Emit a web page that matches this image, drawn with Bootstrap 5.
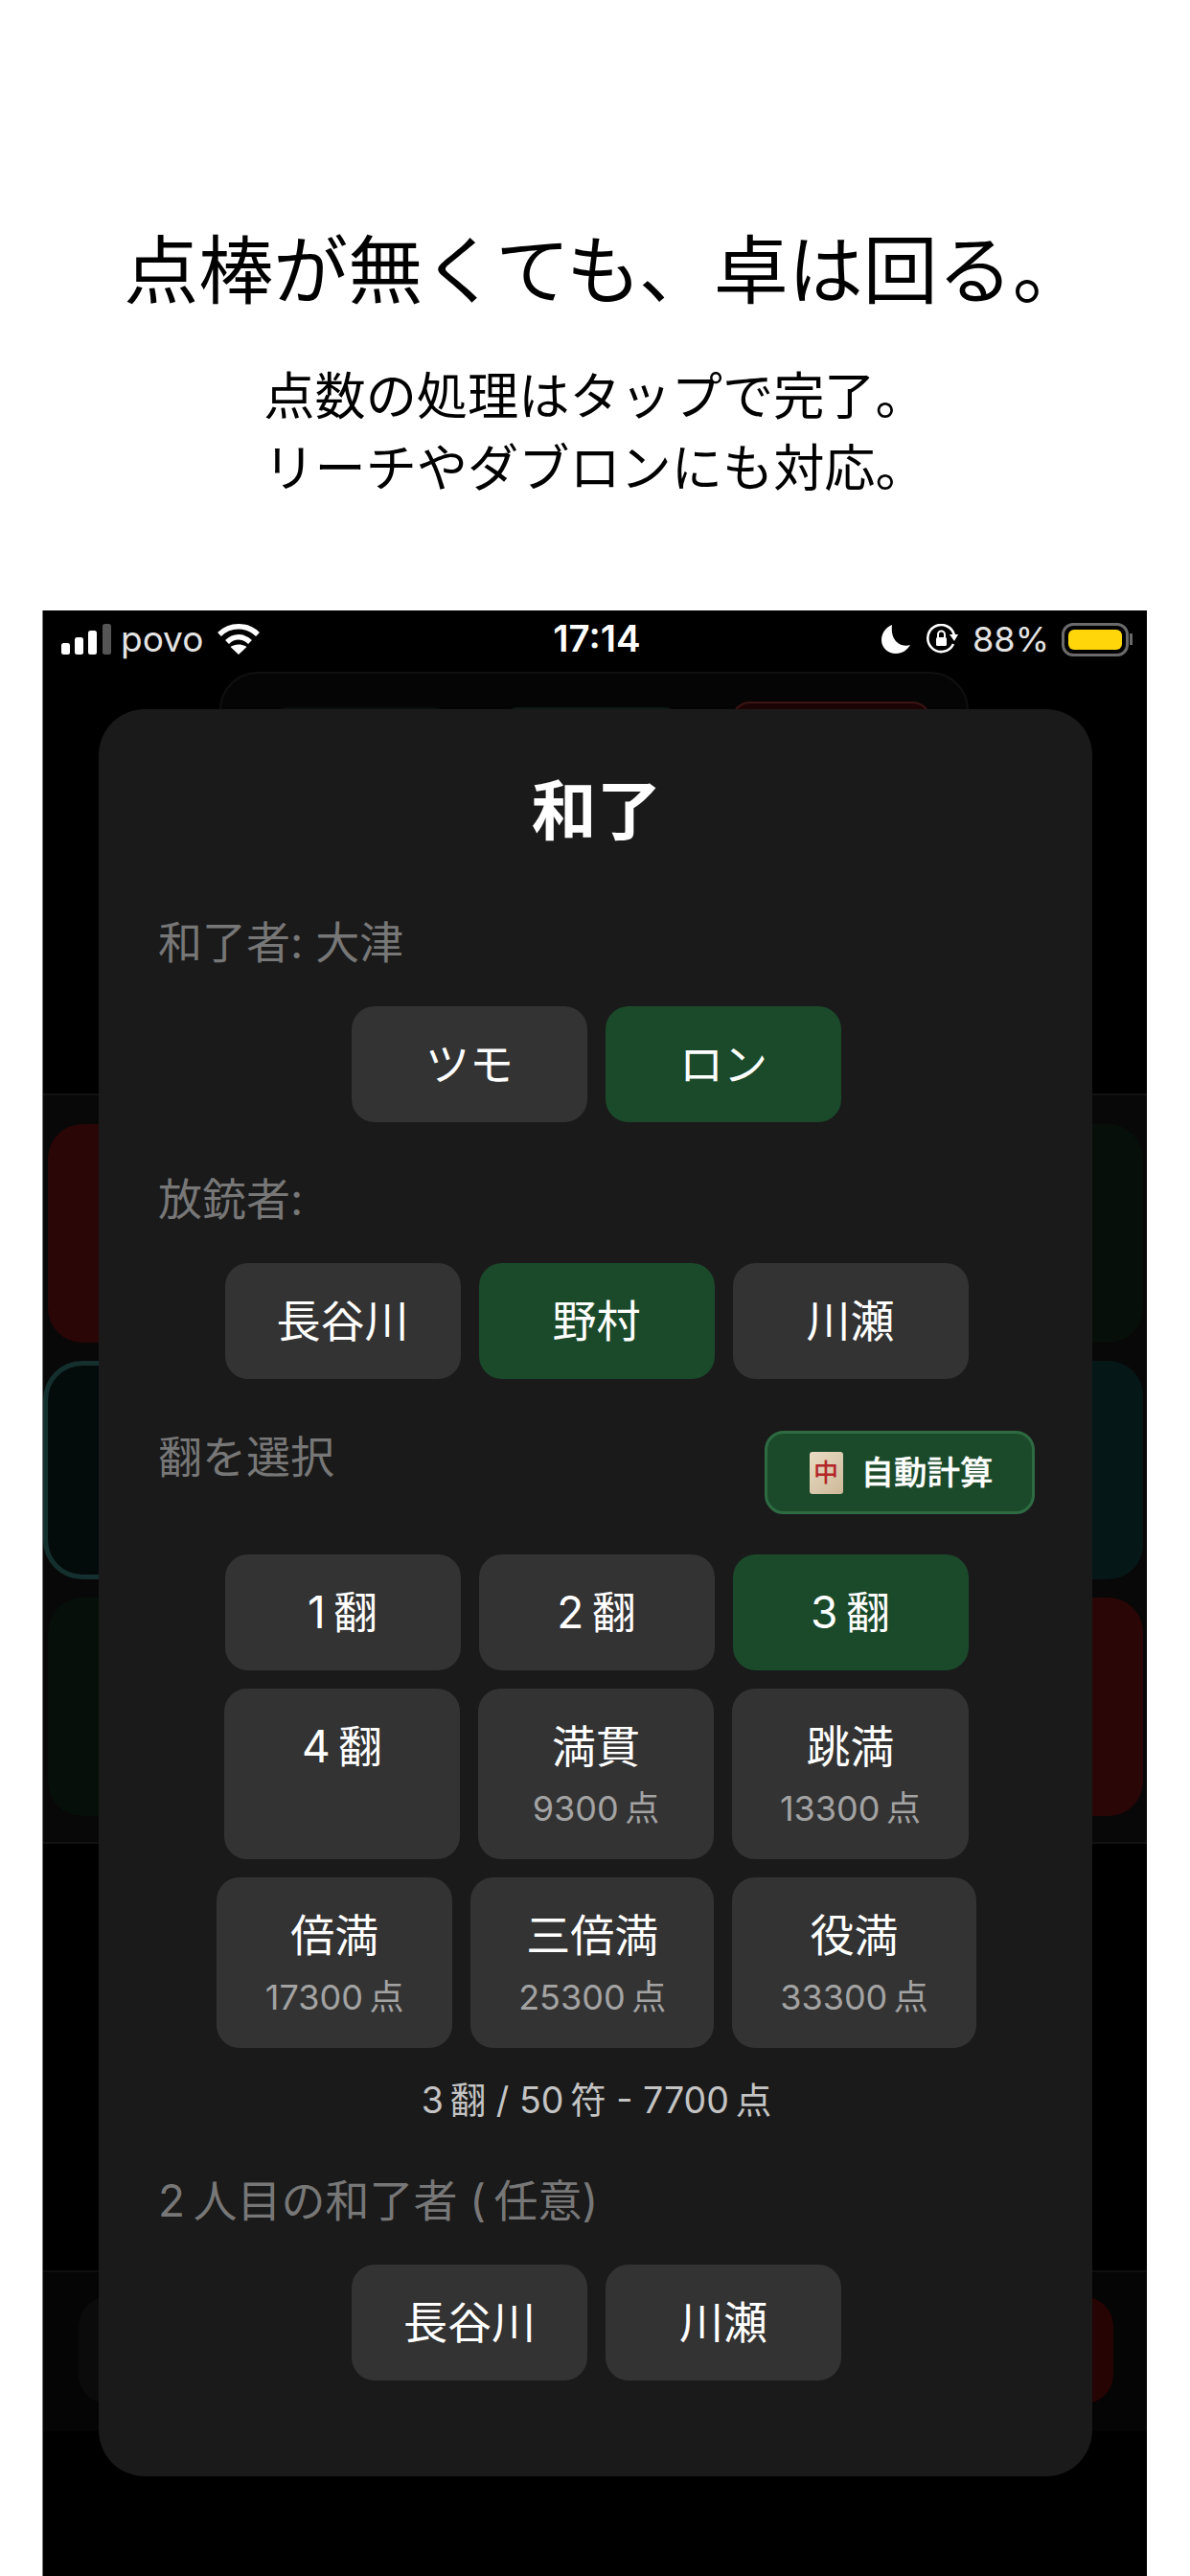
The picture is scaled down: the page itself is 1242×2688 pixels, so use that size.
<!DOCTYPE html>
<html lang="ja">
<head>
    <meta charset="UTF-8">
    <meta name="viewport" content="width=device-width, initial-scale=1.0">
    <title>点棒が無くても、卓は回る。</title>
    <link href="https://cdn.jsdelivr.net/npm/bootstrap@5.3.0/dist/css/bootstrap.min.css" rel="stylesheet">
    <style>
        body {
            background: #fff;
            font-family: Inter, "Noto Sans CJK JP", sans-serif;
            width: 1242px;
            height: 2688px;
            overflow: hidden;
        }
        .promo { height: 637px; padding-top: 235px; color: #000; text-align: center; }
        .promo-title { font-size: 78px; line-height: 96px; font-weight: 400; margin: 0 0 45px; padding-left: 22px; }
        .promo-sub { font-size: 53.2px; line-height: 75px; margin: 0; }

        .phone {
            position: relative;
            margin: 0 45px 0 44px;
            height: 2051px;
            background: #000;
            border-left: 1px solid #777;
            overflow: hidden;
        }
        .status-bar { height: 60px; padding: 0 15px 0 19px; color: #fff; }
        .status-side { flex: 1 1 0; }
        .carrier { font-size: 37px; color: #e4e4e4; margin: 0 14px 0 4px; }
        .clock { font-size: 38.5px; font-weight: 600; }
        .percent { font-size: 36px; color: #e4e4e4; margin: 0 13px 0 14px; }
        .battery {
            width: 70px;
            height: 35px;
            padding: 4px;
            border: 3px solid #6a6a6a;
            border-radius: 12px;
        }
        .battery-fill { height: 100%; background: #ffd60a; border-radius: 6px; }
        .battery-nub { width: 3px; height: 12px; background: #6a6a6a; margin-left: 1px; }

        .ghost-top {
            margin: 4px 0 0 184px;
            width: 782px;
            height: 200px;
            padding: 29px 0 0 50px;
            gap: 51px;
            border: 2px solid #101010;
            border-radius: 40px;
            background: #050505;
        }
        .ghost-tab { margin-top: 6px; width: 190px; height: 120px; border: 2px solid #0b100f; border-radius: 20px; background: #060808; }
        .ghost-tab.ghost-mid { border-color: #0f1a19; }
        .ghost-tab.ghost-red { margin-top: 0; width: 209px; border-color: #3d1414; background: #1c0404; }
        .ghost-band {
            margin-top: 240px;
            height: 783px;
            padding: 30px 4px 0 5px;
            gap: 19px;
            background: #080808;
            border-top: 2px solid #121212;
            border-bottom: 2px solid #121212;
        }
        .ghost-seat { width: 440px; height: 228px; border-radius: 36px; }
        .seat-red { background: #2a0606; }
        .seat-green { background: #070f0a; }
        .seat-teal { background: #051717; }
        .seat-turn { height: 218px; margin: 5px 0; background: #030b0b; box-shadow: 0 0 0 5px #14302e; }
        .ghost-foot {
            margin-top: 445px;
            height: 168px;
            padding: 26px 35px 0 37px;
            background: #050505;
            border-top: 2px solid #0e0e0e;
        }
        .foot-btn { width: 300px; height: 111px; border-radius: 30px; background: #0b0b0b; }
        .foot-btn.foot-red { background: #260404; }

        .win-sheet {
            position: absolute;
            left: 58px;
            top: 103px;
            width: 1037px;
            height: 1844px;
            padding: 66px 60px 0 62px;
            background: #1a1a1a;
            border-radius: 48px;
        }
        .sheet-title { font-size: 68px; line-height: 80px; font-weight: 700; color: #fff; text-align: center; margin: 0 0 70px; }
        .sheet-label { font-size: 46px; line-height: 54px; color: #777; margin: 0 0 40px; }
        .sheet-row { gap: 19px; }
        .sheet-row + .sheet-label { margin-top: 53px; }
        .btn.tile-btn {
            display: flex;
            flex-direction: column;
            align-items: center;
            min-width: 246px;
            min-height: 121px;
            padding: 36px 50px 31px;
            background: #333;
            border: 0;
            border-radius: 24px;
            color: #fff;
            font-size: 46px;
            line-height: 49px;
            white-space: nowrap;
        }
        .btn.tile-btn.is-on { background: #1b4a2b; }
        .pts { display: block; margin-top: 18px; font-size: 36px; line-height: 44px; color: #a3a3a3; }
        .fan-head { margin: 54px 0 42px; }
        .fan-head .sheet-label { margin: 0; }
        .btn.auto-btn {
            width: 282px;
            height: 87px;
            padding: 0 0 0 3px;
            gap: 19px;
            background: #1b4a2b;
            border: 3px solid #2e6b42;
            border-radius: 20px;
            color: #fff;
            font-size: 34.5px;
            font-weight: 500;
            -webkit-text-stroke: 0.3px #fff;
        }
        .mj-tile {
            width: 35px;
            height: 44px;
            background: linear-gradient(135deg, #e9dcc4, #cdb999);
            border-radius: 3px;
            color: #b3262a;
            font-size: 26px;
            line-height: 44px;
            text-align: center;
            -webkit-text-stroke: 0;
        }
        .fan-rows { gap: 19px; }
        .fan-sum { margin: 30px 0 52px; font-size: 37.5px; line-height: 50px; color: #c4c4c4; text-align: center; }
    </style>
</head>
<body>
    <!-- Promo header -->
    <div class="promo">
        <h1 class="promo-title">点棒が無くても、卓は回る。</h1>
        <p class="promo-sub">点数の処理はタップで完了。<br>リーチやダブロンにも対応。</p>
    </div>

    <div class="phone">
        <!-- Status bar -->
        <div class="status-bar d-flex align-items-center">
            <div class="status-side d-flex align-items-center">
                <svg width="58" height="32" viewBox="0 0 58 32" fill="#fff">
                    <rect x="0" y="20" width="9" height="12" rx="2.5"/>
                    <rect x="14" y="14" width="9" height="18" rx="2.5"/>
                    <rect x="28" y="7" width="9" height="25" rx="2.5"/>
                    <rect x="43" y="0" width="9" height="32" rx="2.5" fill="#555"/>
                </svg>
                <span class="carrier">povo</span>
                <svg width="46" height="34" viewBox="0 0 46 34" fill="none" stroke="#fff" stroke-width="5.5">
                    <path d="M3 12 C14 1 32 1 43 12"/>
                    <path d="M11 20 C18 13 28 13 35 20"/>
                    <path d="M23 33 L14.5 25 C19 21.5 27 21.5 31.5 25 Z" fill="#fff" stroke="none"/>
                </svg>
            </div>
            <span class="clock">17:14</span>
            <div class="status-side d-flex align-items-center justify-content-end">
                <svg width="31" height="30" viewBox="0 0 31 30" fill="#fff" class="me-3">
                    <path d="M11 0 C4 3 0 9 0 16 C0 24 7 30 15 30 C22 30 27 26 30 21 C20 24 9 17 11 0 Z"/>
                </svg>
                <svg width="34" height="32" viewBox="0 0 34 32" fill="none" stroke="#fff" stroke-width="2.6">
                    <path d="M28 21 A14 14 0 1 1 29 12"/>
                    <path d="M24 11 L33 11 L29 18 Z" fill="#fff" stroke="none"/>
                    <rect x="10" y="14" width="11" height="9" rx="1.5" fill="#fff" stroke="none"/>
                    <path d="M12 14 V11 A3.5 3.5 0 0 1 19 11 V14" stroke-width="2"/>
                </svg>
                <span class="percent">88%</span>
                <div class="battery"><div class="battery-fill"></div></div>
                <div class="battery-nub"></div>
            </div>
        </div>

        <!-- Dimmed game table behind the dialog -->
        <div class="ghost-top d-flex justify-content-start">
            <div class="ghost-tab"></div>
            <div class="ghost-tab ghost-mid"></div>
            <div class="ghost-tab ghost-red"></div>
        </div>
        <div class="ghost-band d-flex flex-column">
            <div class="d-flex justify-content-between">
                <div class="ghost-seat seat-red"></div>
                <div class="ghost-seat seat-green"></div>
            </div>
            <div class="d-flex justify-content-between">
                <div class="ghost-seat seat-turn"></div>
                <div class="ghost-seat seat-teal"></div>
            </div>
            <div class="d-flex justify-content-between">
                <div class="ghost-seat seat-green"></div>
                <div class="ghost-seat seat-red"></div>
            </div>
        </div>
        <div class="ghost-foot d-flex justify-content-between">
            <div class="foot-btn"></div>
            <div class="foot-btn foot-red"></div>
        </div>

        <!-- Win dialog -->
        <div class="win-sheet">
            <h2 class="sheet-title">和了</h2>

            <p class="sheet-label">和了者: 大津</p>
            <div class="sheet-row d-flex justify-content-center">
                <button class="btn tile-btn">ツモ</button>
                <button class="btn tile-btn is-on">ロン</button>
            </div>

            <p class="sheet-label">放銃者:</p>
            <div class="sheet-row d-flex justify-content-center">
                <button class="btn tile-btn">長谷川</button>
                <button class="btn tile-btn is-on">野村</button>
                <button class="btn tile-btn">川瀬</button>
            </div>

            <div class="fan-head d-flex justify-content-between align-items-start">
                <p class="sheet-label">翻を選択</p>
                <button class="btn auto-btn d-flex align-items-center justify-content-center">
                    <span class="mj-tile">中</span>自動計算
                </button>
            </div>

            <div class="fan-rows d-flex flex-column">
                <div class="sheet-row d-flex justify-content-center">
                    <button class="btn tile-btn">1&#8201;翻</button>
                    <button class="btn tile-btn">2&#8201;翻</button>
                    <button class="btn tile-btn is-on">3&#8201;翻</button>
                </div>
                <div class="sheet-row d-flex justify-content-center">
                    <button class="btn tile-btn">4&#8201;翻</button>
                    <button class="btn tile-btn">満貫<span class="pts">9300&#8201;点</span></button>
                    <button class="btn tile-btn">跳満<span class="pts">13300&#8201;点</span></button>
                </div>
                <div class="sheet-row d-flex justify-content-center">
                    <button class="btn tile-btn">倍満<span class="pts">17300&#8201;点</span></button>
                    <button class="btn tile-btn">三倍満<span class="pts">25300&#8201;点</span></button>
                    <button class="btn tile-btn">役満<span class="pts">33300&#8201;点</span></button>
                </div>
            </div>

            <p class="fan-sum">3&#8201;翻 / 50&#8201;符 - 7700&#8201;点</p>

            <p class="sheet-label">2&#8201;人目の和了者 (&#8201;任意)</p>
            <div class="sheet-row d-flex justify-content-center">
                <button class="btn tile-btn">長谷川</button>
                <button class="btn tile-btn">川瀬</button>
            </div>
        </div>
    </div>

    <script src="https://cdn.jsdelivr.net/npm/bootstrap@5.3.0/dist/js/bootstrap.bundle.min.js"></script>
</body>
</html>
